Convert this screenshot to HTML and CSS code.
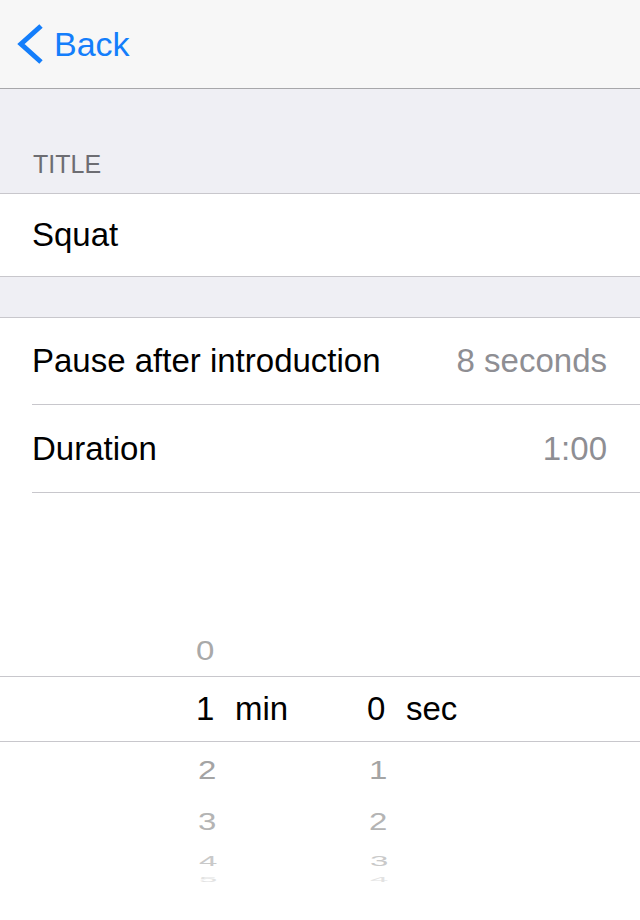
FILE: index.html
```html
<!DOCTYPE html>
<html lang="en">
<head>
    <meta charset="UTF-8">
    <meta name="viewport" content="width=device-width, initial-scale=1.0">
    <title>Edit Exercise</title>
    <link rel="stylesheet" href="styles.css">
</head>

<body>
    <header class="nav">
        <a class="back" href="#">
            <svg class="chevron" width="28" height="42" viewBox="0 0 28 42">
                <polyline points="26,3 6,21 26,39" fill="none" stroke="#147efb" stroke-width="5" stroke-linejoin="miter" stroke-linecap="butt"/>
            </svg>
            <span>Back</span>
        </a>
    </header>

    <main class="table">
        <div class="section-header">Title</div>
        <div class="group">
            <div class="cell cell-plain">Squat</div>
        </div>

        <div class="section-gap"></div>

        <div class="group">
            <div class="cell cell-detail pause">
                <span>Pause after introduction</span>
                <span class="value">8 seconds</span>
            </div>
            <div class="cell cell-detail duration">
                <span>Duration</span>
                <span class="value">1:00</span>
            </div>
        </div>

        <div class="picker">
            <div class="picker-row row-above">
                <div class="picker-col"><span class="num">0</span></div>
                <div class="picker-col"></div>
            </div>
            <div class="picker-row row-selected">
                <div class="picker-col"><span class="num">1</span><span class="unit">min</span></div>
                <div class="picker-col"><span class="num">0</span><span class="unit">sec</span></div>
            </div>
            <div class="picker-row row-below-1">
                <div class="picker-col"><span class="num">2</span></div>
                <div class="picker-col"><span class="num">1</span></div>
            </div>
            <div class="picker-row row-below-2">
                <div class="picker-col"><span class="num">3</span></div>
                <div class="picker-col"><span class="num">2</span></div>
            </div>
            <div class="picker-row row-below-3">
                <div class="picker-col"><span class="num">4</span></div>
                <div class="picker-col"><span class="num">3</span></div>
            </div>
            <div class="picker-row row-below-4">
                <div class="picker-col"><span class="num">5</span></div>
                <div class="picker-col"><span class="num">4</span></div>
            </div>
        </div>
    </main>
</body>

</html>
```

FILE: styles.css
```css
body {
    margin: 0;
    background-color: #fff;
    color: #000;
    font-family: "Liberation Sans", Arial, sans-serif;
    width: 640px;
    height: 920px;
    overflow: hidden;
}

.nav {
    height: 88px;
    background-color: #f7f7f7;
    border-bottom: 1px solid #a7a7aa;
    display: flex;
    align-items: center;
}

.back {
    display: flex;
    align-items: center;
    margin-left: 15px;
    color: #147efb;
    text-decoration: none;
    font-size: 34px;
}

.chevron {
    display: block;
    margin-right: 11px;
}

.section-header {
    height: 104px;
    box-sizing: border-box;
    background-color: #efeff4;
    color: #6d6d72;
    font-size: 25px;
    line-height: 25px;
    text-transform: uppercase;
    padding: 0 33px 16px;
    display: flex;
    align-items: flex-end;
}

.group {
    background-color: #fff;
    border-top: 1px solid #c8c7cc;
}

.cell {
    display: flex;
    align-items: center;
    font-size: 33px;
    box-sizing: border-box;
}

.cell-plain {
    height: 83px;
    padding-left: 32px;
    border-bottom: 1px solid #c8c7cc;
}

.cell-detail {
    justify-content: space-between;
    margin-left: 32px;
    padding-right: 33px;
    border-bottom: 1px solid #c8c7cc;
}

.pause {
    height: 87px;
}

.duration {
    height: 88px;
}

.value {
    color: #8e8e93;
}

.section-gap {
    height: 40px;
    background-color: #efeff4;
}

.picker {
    padding-top: 133px;
    font-size: 33px;
    line-height: 38px;
}

.picker-row {
    display: flex;
    align-items: center;
    padding-left: 196px;
    overflow: visible;
}

.picker-col {
    display: flex;
    align-items: center;
    width: 171px;
    flex-shrink: 0;
}

.num {
    display: inline-block;
    width: 19px;
}

.unit {
    margin-left: 20px;
}

.row-above {
    height: 50px;
    color: #a9a9a9;
}

.row-above .num {
    transform: scaleY(0.82);
}

.row-selected {
    height: 64px;
    border-top: 1px solid #c8c7cc;
    border-bottom: 1px solid #c8c7cc;
    color: #000;
}

.row-below-1 {
    height: 56px;
    color: #a4a4a4;
}

.row-below-1 .num {
    transform: translateX(2px) scaleY(0.8);
}

.row-below-2 {
    height: 48px;
    color: #b4b4b4;
}

.row-below-2 .num {
    transform: translateX(2px) scaleY(0.72);
}

.row-below-3 {
    height: 29px;
    color: #c9c9c9;
}

.row-below-3 .num {
    transform: translateX(3px) scaleY(0.44);
}

.row-below-4 {
    height: 9px;
    color: #e2e2e2;
}

.row-below-4 .num {
    transform: translateX(3px) scaleY(0.2);
}
```
